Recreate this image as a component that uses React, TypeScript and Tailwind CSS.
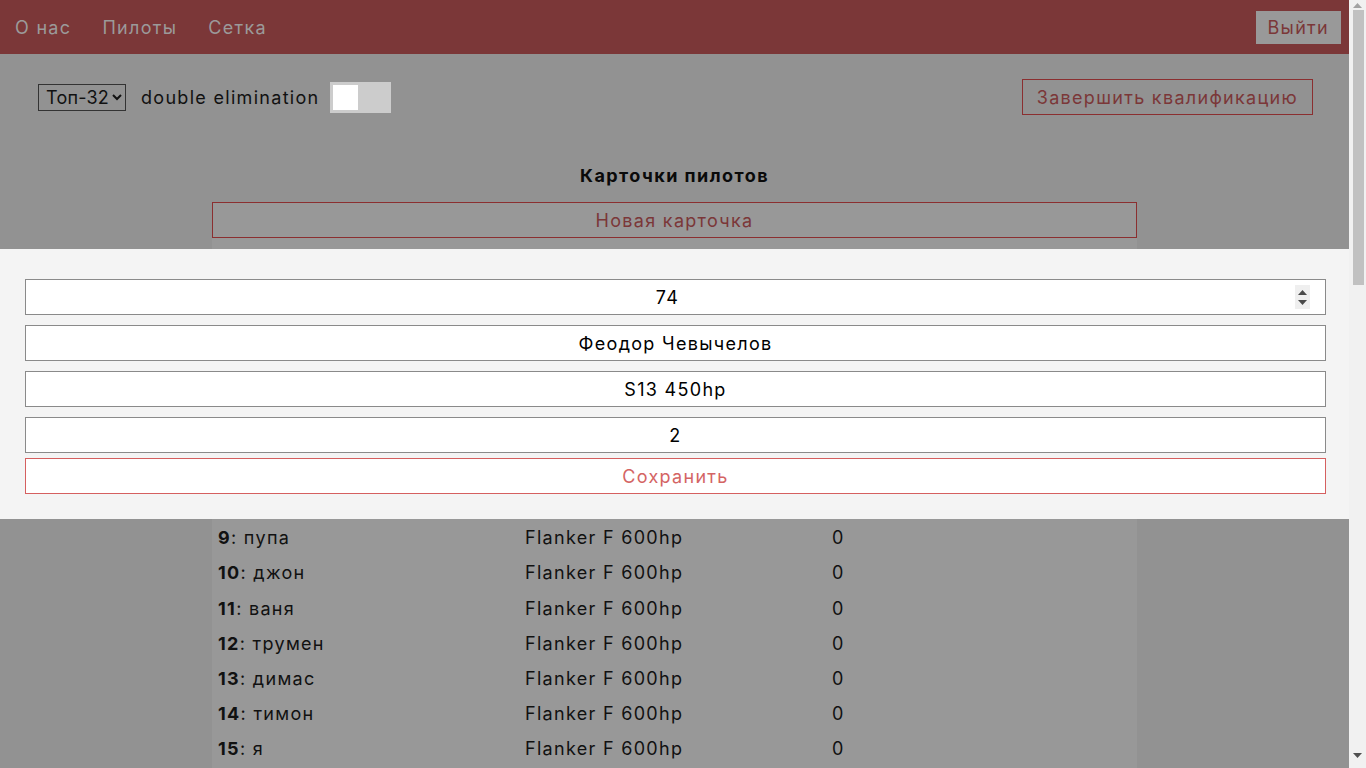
import React from "react";

const names = [
  "алекс", "боря", "вова", "гоша", "денис", "егор", "женя", "зина",
  "пупа", "джон", "ваня", "трумен", "димас", "тимон", "я", "лупа",
  "миша", "коля", "петя", "саша", "федя", "гена", "лёша", "рома",
  "олег", "игорь", "костя", "паша", "стас", "юра", "макс", "артём",
];

export default function App() {
  return (
    <div
      className="flex h-screen overflow-hidden text-[18px] tracking-[1.3px] text-black"
      style={{ fontFamily: "Inter, 'Noto Sans', sans-serif" }}
    >
      <div className="relative flex-1 overflow-hidden bg-[#929292]">
        <header className="h-[54px] bg-[#7b3738] flex items-center justify-between pl-[15px] pr-[8px]">
          <nav className="flex items-center gap-[31px] text-[#9b9a9a]">
            <span>О нас</span>
            <span>Пилоты</span>
            <span>Сетка</span>
          </nav>
          <button className="h-[33px] px-[12px] bg-[#999999] text-[#7b3738] tracking-[1.3px]">Выйти</button>
        </header>

        <div className="flex items-center justify-between pl-[38px] pr-[36px] pt-[25px]">
          <div className="flex items-center">
            <select
              className="h-[27px] border border-[#333] text-[#111] pl-[3px] pr-[0px] tracking-[0.2px]"
              defaultValue="32"
            >
              <option value="32">Топ-32</option>
            </select>
            <span className="ml-[15px] text-[#111]">double elimination</span>
            <div className="ml-[10px] w-[61px] h-[31px] bg-[#cccccc] p-[3px] flex">
              <div className="w-[25px] h-[25px] bg-white" />
            </div>
          </div>
          <button className="h-[36px] px-[14px] border border-[#8b2f30] text-[#7b3738] tracking-[1.3px]">
            Завершить квалификацию
          </button>
        </div>

        <div className="w-[925px] mx-auto mt-[47px]">
          <h2 className="text-center font-bold text-[#0a0a0a] h-[28px] leading-[27px] mb-[12px] tracking-[1.45px]">
            Карточки пилотов
          </h2>
          <div className="bg-[#989898] pb-[20px]">
            <button className="w-full h-[36px] border border-[#8b2f30] text-[#7b3738] bg-[#989898] tracking-[1.3px]">
              Новая карточка
            </button>
            <div className="pt-[1px]">
              {names.map((n, i) => (
                <div
                  key={i}
                  className="grid grid-cols-[307px_307px_1fr] h-[35.17px] items-center pl-[6px] text-[#111]"
                >
                  <div>
                    <b className="font-bold">{i + 1}</b>: {n}
                  </div>
                  <div>Flanker F 600hp</div>
                  <div>0</div>
                </div>
              ))}
            </div>
          </div>
        </div>

        <div className="absolute left-0 right-0 top-[249px] h-[270px] bg-[#f4f4f4] pt-[30px] pl-[25px] pr-[23px] flex flex-col">
          <div className="relative h-[36px] border border-[#8a8a8a] bg-white flex items-center justify-center pr-[16px]">
            <span>74</span>
            <div className="absolute right-[15px] top-[5px] w-[15px] h-[24px] bg-[#efefef] flex flex-col items-center justify-center gap-[5px]">
              <svg width="9" height="5" viewBox="0 0 9 5"><path d="M0 5 L4.5 0 L9 5 Z" fill="#4a4a4a" /></svg>
              <svg width="9" height="5" viewBox="0 0 9 5"><path d="M0 0 L4.5 5 L9 0 Z" fill="#4a4a4a" /></svg>
            </div>
          </div>
          <div className="mt-[10px] h-[36px] border border-[#8a8a8a] bg-white flex items-center justify-center">
            Феодор Чевычелов
          </div>
          <div className="mt-[10px] h-[36px] border border-[#8a8a8a] bg-white flex items-center justify-center">
            S13 450hp
          </div>
          <div className="mt-[10px] h-[36px] border border-[#8a8a8a] bg-white flex items-center justify-center">2</div>
          <button className="mt-[5px] h-[36px] border border-[#d55f5f] bg-white text-[#d46464] tracking-[1.3px]">
            Сохранить
          </button>
        </div>
      </div>

      <div className="w-[17px] h-full bg-[#f1f1f1] flex flex-col">
        <div className="h-[10px] flex items-center justify-center pt-[1px]">
          <svg width="9" height="5" viewBox="0 0 9 5"><path d="M0 5 L4.5 0 L9 5 Z" fill="#a3a3a3" /></svg>
        </div>
        <div className="ml-[4px] mr-[2px] h-[275px] bg-[#c1c1c1]" />
        <div className="flex-1" />
        <div className="h-[15px] flex items-start justify-center pt-[0px] pb-[10px]">
          <svg width="9" height="5" viewBox="0 0 9 5"><path d="M0 0 L4.5 5 L9 0 Z" fill="#505050" /></svg>
        </div>
      </div>
    </div>
  );
}
